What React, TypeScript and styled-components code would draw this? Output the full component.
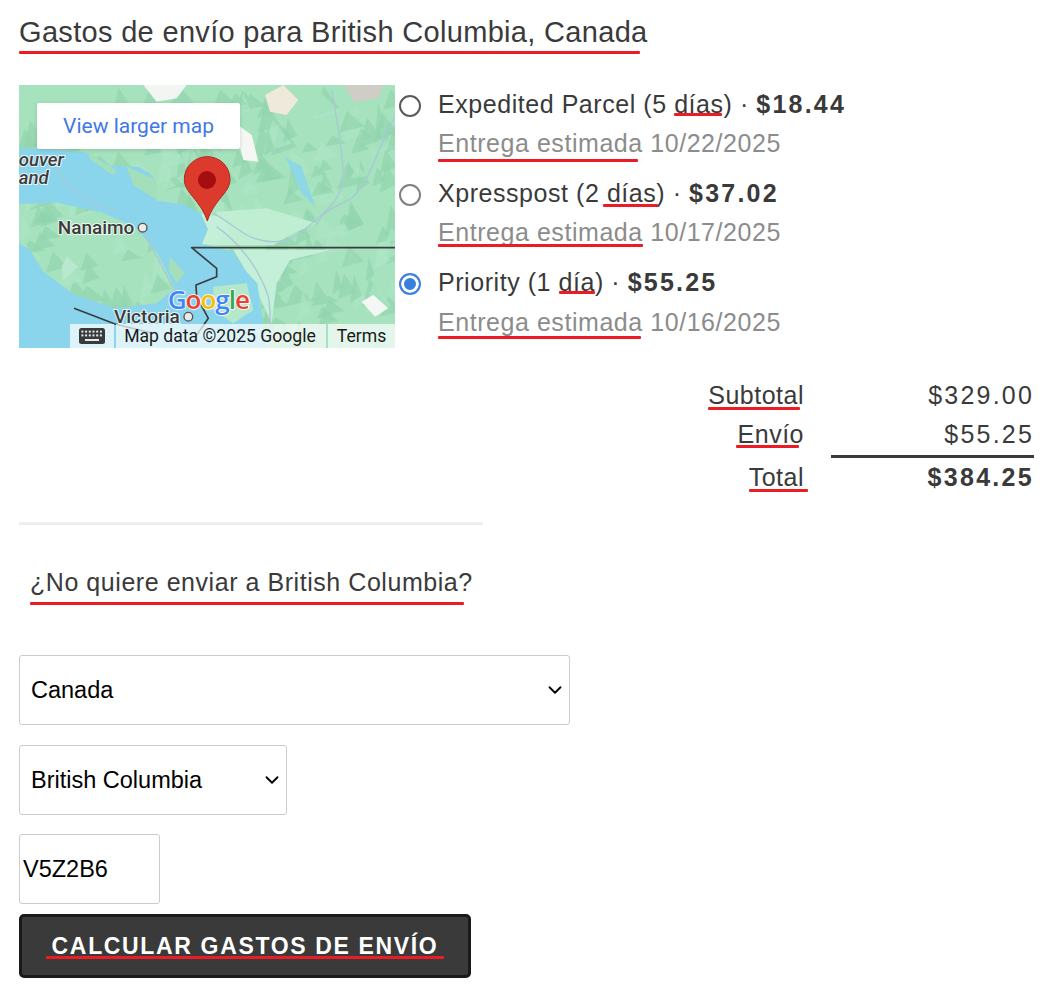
import React from "react";
import styled, { createGlobalStyle } from "styled-components";
import { ChevronDown } from "lucide-react";

const Global = createGlobalStyle`
  html, body { margin: 0; padding: 0; background: #fff; }
  body { font-family: "Liberation Sans", Arial, sans-serif; color: #3a3a3a; }
`;

const Page = styled.div`
  width: 1062px;
  height: 997px;
  box-sizing: border-box;
  padding: 0 28px 0 19px;
  overflow: hidden;
`;

const Heading = styled.h2`
  margin: 0;
  padding-top: 15px;
  height: 70px;
  box-sizing: border-box;
  font-size: 29px;
  line-height: 34px;
  font-weight: 400;
  letter-spacing: 0.32px;
`;

const Mark = styled.span<{ $l?: number; $r?: number; $b?: number }>`
  position: relative;
  &::after {
    content: "";
    position: absolute;
    left: ${(p) => p.$l ?? 0}px;
    right: ${(p) => p.$r ?? 0}px;
    bottom: ${(p) => p.$b ?? 0}px;
    height: 3px;
    border-radius: 1px;
    background: #ed1c24;
  }
`;

const Shipping = styled.section`
  display: flex;
  gap: 4px;
  margin-top: 15px;
`;

const MapFrame = styled.div`
  position: relative;
  flex: none;
  width: 376px;
  height: 263px;
  overflow: hidden;
  font-family: Roboto, sans-serif;
`;

const MapArt = styled.svg`
  display: block;
  width: 376px;
  height: 263px;
`;

const LargerMap = styled.a`
  position: absolute;
  left: 18px;
  top: 18px;
  width: 203px;
  height: 46px;
  display: flex;
  align-items: center;
  justify-content: center;
  background: #fff;
  border-radius: 2px;
  box-shadow: 0 1px 4px rgba(0, 0, 0, 0.15);
  color: #4078e8;
  font-size: 21px;
`;

const Attribution = styled.div`
  position: absolute;
  right: 0;
  bottom: 0;
  display: flex;
  gap: 2px;
  height: 24px;
`;

const AttrCell = styled.div<{ $w: number; $pad?: number }>`
  width: ${(p) => p.$w}px;
  box-sizing: border-box;
  padding-right: ${(p) => p.$pad ?? 0}px;
  display: flex;
  align-items: center;
  justify-content: center;
  background: rgba(255, 255, 255, 0.7);
  color: #1a1a1a;
  font-size: 17.6px;
  white-space: nowrap;
`;

const Options = styled.div`
  display: flex;
  flex-direction: column;
`;

const Option = styled.label`
  display: flex;
  gap: 17px;
  height: 89px;
`;

const Radio = styled.input.attrs({ type: "radio" })<{ $tone?: string }>`
  appearance: none;
  flex: none;
  box-sizing: border-box;
  width: 22px;
  height: 22px;
  margin: 10px 0 0;
  border: 2px solid ${(p) => p.$tone ?? "#555"};
  border-radius: 50%;
  background: #fff;
  &:checked {
    border-color: #3b82e4;
    background: #3b7fdc;
    box-shadow: inset 0 0 0 3px #fff;
  }
`;

const OptionText = styled.div`
  font-size: 25px;
  line-height: 39px;
  letter-spacing: 0.55px;
  white-space: nowrap;
`;

const Price = styled.strong`
  font-weight: 700;
  letter-spacing: 2.2px;
`;

const Estimate = styled.div<{ $nudge?: number }>`
  margin-top: ${(p) => p.$nudge ?? 0}px;
  color: #8c8c8c;
`;

const Summary = styled.dl`
  display: grid;
  grid-template-columns: auto 203px;
  column-gap: 27px;
  width: max-content;
  margin: 24px 0 0 auto;
  font-size: 25px;
  line-height: 39px;
  letter-spacing: 0.5px;
`;

const Label = styled.dt`
  margin: 0;
  text-align: right;
`;

const Amount = styled.dd<{ $total?: boolean }>`
  margin: 0;
  text-align: right;
  letter-spacing: 2.2px;
  font-weight: ${(p) => (p.$total ? 700 : 400)};
  ${(p) =>
    p.$total &&
    "margin-top: 1px; padding-bottom: 2px; border-top: 3px solid #3a3a3a; letter-spacing: 2.3px; line-height: 38px;"}
`;

const TotalLabel = styled(Label)`
  padding: 4px 0 2px;
  line-height: 38px;
`;

const Divider = styled.hr`
  width: 464px;
  height: 3px;
  border: 0;
  margin: 24px 0 0;
  background: #eeeeee;
`;

const Question = styled.h3`
  margin: 0;
  padding: 40px 0 0 11px;
  font-size: 25px;
  line-height: 34px;
  font-weight: 400;
  letter-spacing: 0.55px;
`;

const Form = styled.form`
  display: flex;
  flex-direction: column;
  align-items: flex-start;
  margin-top: 56px;
`;

const SelectBox = styled.div<{ $w: number; $mb: number }>`
  position: relative;
  width: ${(p) => p.$w}px;
  height: 70px;
  margin-bottom: ${(p) => p.$mb}px;
  color: #000;
  svg {
    position: absolute;
    right: 4px;
    top: 24px;
    pointer-events: none;
  }
`;

const Select = styled.select`
  appearance: none;
  display: block;
  width: 100%;
  height: 100%;
  box-sizing: border-box;
  padding: 0 11px;
  border: 1px solid #ccc;
  border-radius: 3px;
  background: #fff;
  color: #000;
  font-family: "Liberation Sans", Arial, sans-serif;
  font-size: 23.5px;
`;

const Postal = styled.input`
  width: 141px;
  height: 70px;
  box-sizing: border-box;
  padding: 0 3px;
  margin-bottom: 10px;
  border: 1px solid #ccc;
  border-radius: 3px;
  color: #000;
  font-family: "Liberation Sans", Arial, sans-serif;
  font-size: 23.5px;
`;

const Submit = styled.button`
  width: 452px;
  height: 64px;
  box-sizing: border-box;
  border: 3px solid #1a1a1a;
  border-radius: 5px;
  background: #3a3a3a;
  color: #fff;
  font-family: "Liberation Sans", Arial, sans-serif;
  font-size: 23px;
  font-weight: 700;
  letter-spacing: 1.65px;
  text-transform: uppercase;
`;

function rng(seed: number) {
  let s = seed;
  return () => {
    s = (s * 16807) % 2147483647;
    return s / 2147483647;
  };
}

function terrain(): { d: string; c: string }[] {
  const r = rng(4242);
  const out: { d: string; c: string }[] = [];
  for (let i = 0; i < 300; i++) {
    const x = 57 + r() * 1128;
    const y = 45 + r() * 789;
    const a = 18 + r() * 40;
    const b = 25 + r() * 55;
    const c = r() < 0.7 ? "#8fd4ac" : "#aee6c6";
    out.push({ d: `M${x} ${y}l${a} ${b * 0.9}l${-a * 1.5} ${b * 0.35}z`, c });
  }
  return out;
}

const WATER =
  "M57 235L150 238L262 248L330 286L420 292L458 318L470 392L545 402L604 432L624 478L606 522L700 545L735 600L772 640L800 834L57 834Z";
const ISLAND =
  "M57 402L170 398L300 425L405 470L470 545L525 655L470 700L345 715L220 672L130 605L90 540L57 520Z";

const KeyboardGlyph = () => (
  <svg width="26" height="16" viewBox="0 0 26 16" aria-hidden="true">
    <rect width="26" height="16" rx="2.5" fill="#3a3a3a" />
    {[0, 1, 2, 3, 4, 5].map((i) => (
      <rect key={`a${i}`} x={2.4 + i * 3.7} y="2.6" width="2" height="2" fill="#dfeef2" />
    ))}
    {[0, 1, 2, 3, 4, 5].map((i) => (
      <rect key={`b${i}`} x={2.4 + i * 3.7} y="6.4" width="2" height="2" fill="#dfeef2" />
    ))}
    <rect x="6" y="11" width="14" height="2" fill="#dfeef2" />
  </svg>
);

const MapDrawing = () => {
  const t = terrain();
  const label = {
    fontFamily: "Roboto, sans-serif",
    fontWeight: 500,
    fill: "#3c3c3c",
    stroke: "#ffffff",
    strokeOpacity: 0.8,
    strokeWidth: 6,
    paintOrder: "stroke",
  } as const;
  return (
    <MapArt viewBox="57 45 1128 789" aria-hidden="true">
      <rect x="57" y="45" width="1128" height="789" fill="#a5e2bd" />
      {t.map((p, i) => (
        <path key={i} d={p.d} fill={p.c} opacity="0.6" />
      ))}
      <path d="M650 425L800 415L950 460L880 490L820 525L640 525Z" fill="#bfeed3" />
      <path d="M700 540H990L870 570L830 640L815 760L760 640Z" fill="#c4efd8" />
      <path d={`${WATER}${ISLAND}`} fill="#8ad5ec" fillRule="evenodd" />
      <path d="M262 248L350 300L340 316L270 268Z" fill="#a3dfba" />
      <path d="M380 290L470 330L470 390L400 345Z" fill="#a3dfba" />
      <path d="M604 432L670 440L690 490L640 525L606 522L624 478Z" fill="#c4efd8" />
      <path d="M510 560L555 610L530 640L505 600Z" fill="#a3dfba" />
      <path d="M640 650L740 640L760 720L700 760L640 720Z" fill="#b5e8cb" />
      <path d="M200 560L235 590L190 630L185 590Z" fill="#b8e8cd" />
      <path d="M855 260L905 290L945 410L905 370Z" fill="#8ad5ec" opacity="0.85" />
      <path d="M795 75L850 45L895 90L860 135L810 125Z" fill="#efe9dc" />
      <path d="M1035 45H1150L1135 85L1060 95Z" fill="#cfcdc6" />
      <path d="M430 45H560L530 85L470 95Z" fill="#f3f5f3" />
      <path d="M700 155L755 195L775 275L730 270Z" fill="#f5f7f5" />
      <path d="M1085 695L1120 675L1165 715L1125 740Z" fill="#f5f7f5" />
      <path
        d="M995 60C1010 150 1030 250 1030 320C1030 390 960 440 900 490C860 520 800 525 740 495C700 470 670 445 640 430M650 470C720 520 780 600 805 680C815 740 810 800 810 834M1185 140C1130 230 1120 320 1060 380C1020 410 980 410 950 460M170 300C210 360 280 410 350 420M430 490C480 570 500 620 540 690"
        fill="none"
        stroke="#a9c9d6"
        strokeWidth="4"
      />
      <g fill="none" stroke="#3a3d3d" strokeWidth="5" strokeLinejoin="round">
        <path d="M1185 533H575L650 595V620L588 645L590 680L625 745L590 795" />
        <path d="M222 715L345 762L460 790" />
      </g>
      <text x="56" y="288" fontSize="56" fontStyle="italic" {...label}>
        ouver
      </text>
      <text x="56" y="342" fontSize="56" fontStyle="italic" {...label}>
        and
      </text>
      <text x="173" y="491" fontSize="57" {...label}>
        Nanaimo
      </text>
      <circle cx="428" cy="473" r="13" fill="#eceae6" stroke="#555" strokeWidth="4" />
      <text x="342" y="758" fontSize="57" {...label}>
        Victoria
      </text>
      <circle cx="565" cy="740" r="13" fill="#eceae6" stroke="#555" strokeWidth="4" />
      <text
        x="503"
        y="717"
        fontSize="78"
        fontFamily="'Open Sans', sans-serif"
        fontWeight="600"
        stroke="#fff"
        strokeWidth="5"
        style={{ paintOrder: "stroke" }}
        letterSpacing="-3"
      >
        <tspan fill="#4285f4">G</tspan>
        <tspan fill="#ea4335">o</tspan>
        <tspan fill="#fbbc05">o</tspan>
        <tspan fill="#4285f4">g</tspan>
        <tspan fill="#34a853">l</tspan>
        <tspan fill="#ea4335">e</tspan>
      </text>
      <path
        d="M622 453C612 420 590 395 570 370C558 354 553 342 553 328C553 290 584 260 622 260C660 260 690 290 690 328C690 342 685 354 673 370C652 395 632 420 622 453Z"
        fill="#db3a2c"
        stroke="#b5251b"
        strokeWidth="3"
      />
      <circle cx="621" cy="330" r="27" fill="#a50e0e" />
    </MapArt>
  );
};

export default function App() {
  return (
    <Page>
      <Global />
      <Heading>
        <Mark $r={8} $b={-6}>Gastos de envío para British Columbia, Canada</Mark>
      </Heading>
      <Shipping>
        <MapFrame>
          <MapDrawing />
          <LargerMap>View larger map</LargerMap>
          <Attribution>
            <AttrCell $w={44}>
              <KeyboardGlyph />
            </AttrCell>
            <AttrCell $w={210} $pad={2}>Map data ©2025 Google</AttrCell>
            <AttrCell $w={67}>Terms</AttrCell>
          </Attribution>
        </MapFrame>
        <Options>
          <Option>
            <Radio name="rate" $tone="#5a5a5a" />
            <OptionText>
              Expedited Parcel (5 <Mark $r={2} $b={2}>días</Mark>) · <Price>$18.44</Price>
              <Estimate>
                <Mark $r={5} $b={-5}>Entrega estimada</Mark> 10/22/2025
              </Estimate>
            </OptionText>
          </Option>
          <Option>
            <Radio name="rate" $tone="#808080" />
            <OptionText>
              Xpresspost (2 <Mark $l={-4} $r={-2} $b={0}>días</Mark>) · <Price>$37.02</Price>
              <Estimate>
                <Mark $b={-1}>Entrega estimada</Mark> 10/17/2025
              </Estimate>
            </OptionText>
          </Option>
          <Option>
            <Radio name="rate" defaultChecked />
            <OptionText>
              Priority (1 <Mark $b={2}>día</Mark>) · <Price>$55.25</Price>
              <Estimate $nudge={1}>
                <Mark $r={2} $b={-3}>Entrega estimada</Mark> 10/16/2025
              </Estimate>
            </OptionText>
          </Option>
        </Options>
      </Shipping>
      <Summary>
        <Label>
          <Mark $r={4} $b={-1}>Subtotal</Mark>
        </Label>
        <Amount>$329.00</Amount>
        <Label>
          <Mark $l={-2} $r={5} $b={0}>Envío</Mark>
        </Label>
        <Amount>$55.25</Amount>
        <TotalLabel>
          <Mark $r={-4} $b={-1}>Total</Mark>
        </TotalLabel>
        <Amount $total>$384.25</Amount>
      </Summary>
      <Divider />
      <Question>
        <Mark $r={9} $b={-9}>¿No quiere enviar a British Columbia?</Mark>
      </Question>
      <Form onSubmit={(e) => e.preventDefault()}>
        <SelectBox $w={551} $mb={20}>
          <Select defaultValue="Canada">
            <option>Canada</option>
          </Select>
          <ChevronDown size={22} strokeWidth={2} />
        </SelectBox>
        <SelectBox $w={268} $mb={19}>
          <Select defaultValue="British Columbia">
            <option>British Columbia</option>
          </Select>
          <ChevronDown size={22} strokeWidth={2} />
        </SelectBox>
        <Postal defaultValue="V5Z2B6" />
        <Submit type="button">
          <Mark $l={-6} $r={-6} $b={0}>Calcular gastos de envío</Mark>
        </Submit>
      </Form>
    </Page>
  );
}
